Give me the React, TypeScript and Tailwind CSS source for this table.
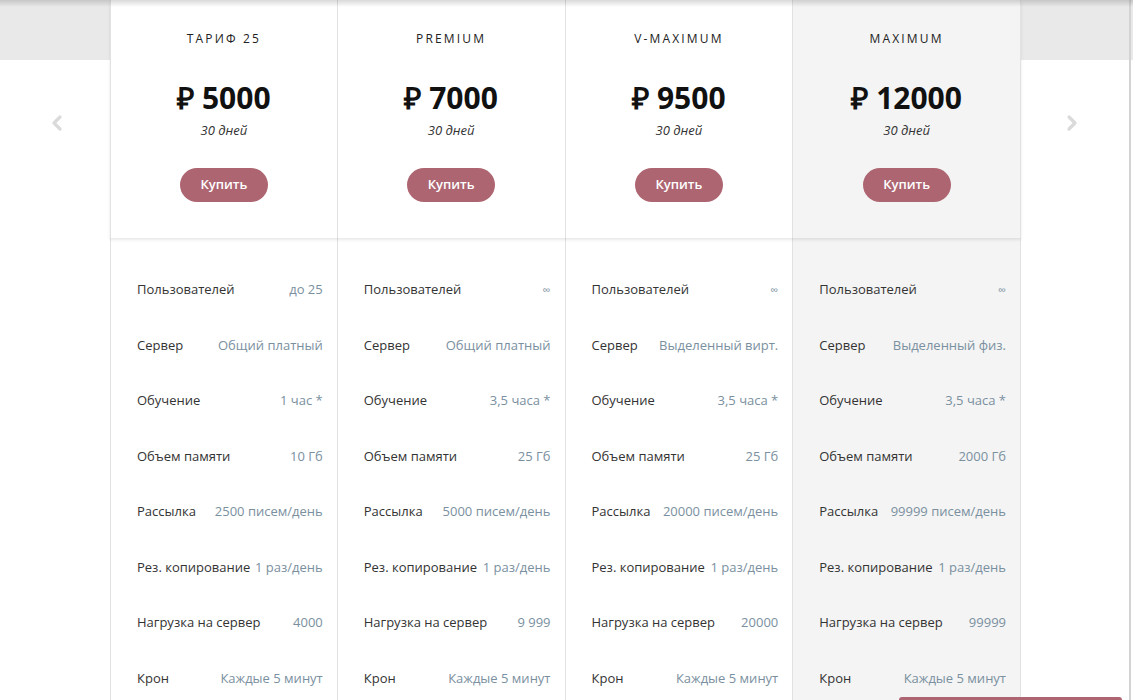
import { ChevronLeft, ChevronRight } from "lucide-react";

const plans = [
  {
    name: "Тариф 25",
    price: "5000",
    values: ["до 25", "Общий платный", "1 час *", "10 Гб", "2500 писем/день", "1 раз/день", "4000", "Каждые 5 минут"],
  },
  {
    name: "Premium",
    price: "7000",
    values: ["∞", "Общий платный", "3,5 часа *", "25 Гб", "5000 писем/день", "1 раз/день", "9 999", "Каждые 5 минут"],
  },
  {
    name: "V-Maximum",
    price: "9500",
    values: ["∞", "Выделенный вирт.", "3,5 часа *", "25 Гб", "20000 писем/день", "1 раз/день", "20000", "Каждые 5 минут"],
  },
  {
    name: "Maximum",
    price: "12000",
    values: ["∞", "Выделенный физ.", "3,5 часа *", "2000 Гб", "99999 писем/день", "1 раз/день", "99999", "Каждые 5 минут"],
    active: true,
  },
];

const labels = [
  "Пользователей",
  "Сервер",
  "Обучение",
  "Объем памяти",
  "Рассылка",
  "Рез. копирование",
  "Нагрузка на сервер",
  "Крон",
];

export default function App() {
  return (
    <div className="relative h-[700px] w-full overflow-hidden bg-[linear-gradient(to_bottom,#e9e9e9_60px,#ffffff_60px)] font-['Open_Sans',sans-serif] text-[#333]">
      {/* top shadow */}
      <div className="pointer-events-none absolute inset-x-0 top-0 z-20 h-[7px] bg-gradient-to-b from-black/15 to-transparent" />

      <div className="flex h-full">
        {/* left arrow */}
        <div className="flex w-[110px] shrink-0 items-start justify-center pt-[111px]">
          <ChevronLeft size={24} strokeWidth={3.2} className="ml-[4px] text-[#dadada]" />
        </div>

        {/* table */}
        <div className="w-[911px] shrink-0">
          {/* header */}
          <div className="relative z-10 grid h-[238px] grid-cols-4 shadow-[0_2px_3px_rgba(0,0,0,0.09)]">
            {plans.map((p, i) => (
              <div
                key={p.name}
                className={`flex flex-col items-center border-r border-[#e2e2e2] ${i === 0 ? "border-l" : ""} ${
                  p.active ? "bg-[#f4f4f4]" : "bg-white"
                }`}
              >
                <div className="mt-[31px] text-[12px] font-medium uppercase leading-4 tracking-[0.18em] text-[#222]">
                  {p.name}
                </div>
                <div className="mt-[36px] text-[30px] font-bold leading-[30px] text-[#111]">₽ {p.price}</div>
                <div className="mt-[9px] text-[13px] italic leading-4 text-[#333]">30 дней</div>
                <button className="mt-[30px] h-[34px] w-[88px] rounded-full bg-[#ad6571] text-[13px] font-semibold text-white">
                  Купить
                </button>
              </div>
            ))}
          </div>

          {/* body */}
          <div className="grid grid-cols-4">
            {plans.map((p, i) => (
              <div
                key={p.name}
                className={`border-r border-[#e2e2e2] pl-[26px] pr-[14px] pt-[24px] ${i === 0 ? "border-l" : ""} ${
                  p.active ? "bg-[#f4f4f4]" : "bg-white"
                }`}
              >
                {labels.map((l, j) => (
                  <div key={l} className="flex h-[55.5px] items-center justify-between text-[13px]">
                    <span className="text-[#333]">{l}</span>
                    <span className={`text-[#7a90a0] ${p.values[j] === "∞" ? "text-[11px]" : ""}`}>{p.values[j]}</span>
                  </div>
                ))}
              </div>
            ))}
          </div>
        </div>

        {/* right arrow */}
        <div className="flex flex-1 items-start justify-center pt-[111px]">
          <ChevronRight size={24} strokeWidth={3.2} className="-ml-[6px] text-[#dadada]" />
        </div>

        {/* scrollbar */}
        <div className="mr-[2px] w-[2px] shrink-0 bg-[#d3d3d3]" />
      </div>

      {/* floating bar bottom right */}
      <div className="absolute bottom-0 left-[899px] h-[3px] w-[223px] rounded-t-[4px] bg-[#ad6571]" />
    </div>
  );
}
